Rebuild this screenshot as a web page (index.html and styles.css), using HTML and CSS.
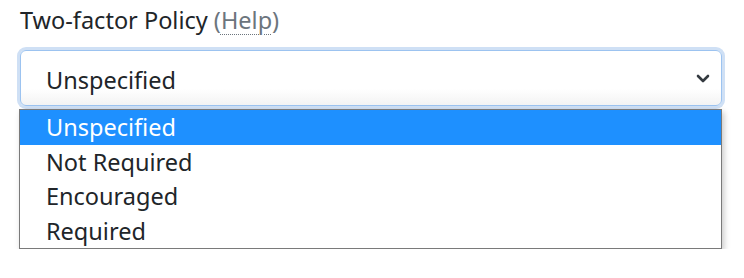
FILE: index.html
```html
<!DOCTYPE html>
<html>
<head>
<meta charset="utf-8">
<link rel="stylesheet" href="styles.css">
</head>
<body>
<div class="field">
  <label class="label">Two-factor Policy <span class="help">(<abbr title="Help">Help</abbr>)</span></label>
  <div class="select-wrap">
    <div class="select">
      <span class="value">Unspecified</span>
      <svg class="chev" width="14" height="9" viewBox="0 0 14 9"><path d="M2 2 L7 7 L12 2" fill="none" stroke="#343a40" stroke-width="2.6" stroke-linecap="round" stroke-linejoin="round"/></svg>
    </div>
    <div class="menu">
      <div class="opt active">Unspecified</div>
      <div class="opt">Not Required</div>
      <div class="opt">Encouraged</div>
      <div class="opt">Required</div>
    </div>
  </div>
</div>
</body>
</html>
```
FILE: styles.css
```css
html, body {
  margin: 0;
  padding: 0;
  background: #ffffff;
}
body {
  font-family: "Noto Sans", "Open Sans", sans-serif;
  color: #212529;
}
.field {
  padding: 5px 22px 0 20px;
}
.label {
  display: block;
  font-size: 23.5px;
  line-height: 31px;
  height: 31px;
}
.help {
  color: #6c757d;
}
.help abbr {
  text-decoration: underline dotted;
  text-decoration-thickness: 1px;
  text-underline-offset: 5px;
}
.select-wrap {
  margin-top: 14px;
}
.select {
  box-sizing: border-box;
  height: 56px;
  border: 1px solid #9cc3f0;
  border-radius: 6px;
  box-shadow: 0 0 0 3px #cfe0f5;
  background: linear-gradient(#ffffff 70%, #f3f3f3);
  display: flex;
  align-items: center;
  justify-content: space-between;
  padding: 3px 11px 0 25px;
  font-size: 23.5px;
}
.value {
  color: #212529;
}
.chev {
  display: block;
  margin-top: -2px;
}
.menu {
  box-sizing: border-box;
  margin: 3px 0 0 -1px;
  background: #ffffff;
  border: 1px solid #7a7a7a;
  box-shadow: 2px 3px 6px rgba(0, 0, 0, 0.22);
}
.opt {
  height: 34.5px;
  line-height: 34.5px;
  padding-left: 26px;
  font-size: 23.5px;
  color: #212529;
}
.opt.active {
  background: #1e90ff;
  color: #ffffff;
}
```
